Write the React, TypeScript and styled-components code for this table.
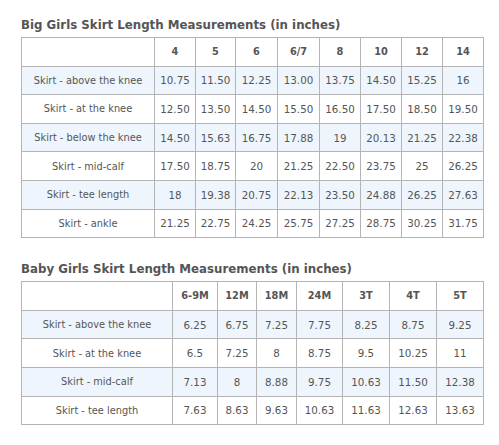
import styled, {createGlobalStyle} from "styled-components";

const GlobalStyle = createGlobalStyle`
  body {
    margin: 0;
    background: #fff;
    font-family: "DejaVu Sans", Verdana, sans-serif;
    color: #555;
  }
`;

const Page = styled.div`
  padding: 19px 16px 0 21px;
  width: 499px;
  box-sizing: border-box;
`;

const Section = styled.section`
  margin-bottom: 25px;
`;

const Title = styled.h2`
  margin: 0 0 5px;
  font-size: 11.8px;
  line-height: 13px;
  font-weight: bold;
  color: #555;
`;

const Table = styled.table`
  border-collapse: collapse;
  table-layout: fixed;
  width: 462px;
  border: 1px solid #a9a9a9;
`;

const Row = styled.tr<{$shaded?: boolean}>`
  height: 28.6px;
  background: ${p => (p.$shaded ? "#eef5fc" : "#fff")};
`;

const Cell = styled.td`
  border: 1px solid #b4b4b4;
  padding: 0;
  text-align: center;
  vertical-align: middle;
  font-size: 10.3px;
  color: #555;
  white-space: nowrap;
`;

const Label = styled(Cell)`
  font-size: 9.8px;
`;

const Head = styled(Cell).attrs({as: "th"})`
  font-weight: bold;
  font-size: 9.8px;
`;

interface ChartProps {
  title: string;
  widths: number[];
  sizes: string[];
  rows: [string, string[]][];
}

function Chart({title, widths, sizes, rows}: ChartProps) {
  return (
    <Section>
      <Title>{title}</Title>
      <Table>
        <colgroup>
          {widths.map((w, i) => (
            <col key={i} style={{width: w}} />
          ))}
        </colgroup>
        <thead>
          <Row>
            <Head />
            {sizes.map(s => (
              <Head key={s}>{s}</Head>
            ))}
          </Row>
        </thead>
        <tbody>
          {rows.map(([label, values], i) => (
            <Row key={label} $shaded={i % 2 === 0}>
              <Label>{label}</Label>
              {values.map((v, j) => (
                <Cell key={j}>{v}</Cell>
              ))}
            </Row>
          ))}
        </tbody>
      </Table>
    </Section>
  );
}

const bigGirls: [string, string[]][] = [
  ["Skirt - above the knee", ["10.75", "11.50", "12.25", "13.00", "13.75", "14.50", "15.25", "16"]],
  ["Skirt - at the knee", ["12.50", "13.50", "14.50", "15.50", "16.50", "17.50", "18.50", "19.50"]],
  ["Skirt - below the knee", ["14.50", "15.63", "16.75", "17.88", "19", "20.13", "21.25", "22.38"]],
  ["Skirt - mid-calf", ["17.50", "18.75", "20", "21.25", "22.50", "23.75", "25", "26.25"]],
  ["Skirt - tee length", ["18", "19.38", "20.75", "22.13", "23.50", "24.88", "26.25", "27.63"]],
  ["Skirt - ankle", ["21.25", "22.75", "24.25", "25.75", "27.25", "28.75", "30.25", "31.75"]],
];

const babyGirls: [string, string[]][] = [
  ["Skirt - above the knee", ["6.25", "6.75", "7.25", "7.75", "8.25", "8.75", "9.25"]],
  ["Skirt - at the knee", ["6.5", "7.25", "8", "8.75", "9.5", "10.25", "11"]],
  ["Skirt - mid-calf", ["7.13", "8", "8.88", "9.75", "10.63", "11.50", "12.38"]],
  ["Skirt - tee length", ["7.63", "8.63", "9.63", "10.63", "11.63", "12.63", "13.63"]],
];

export default function App() {
  return (
    <>
      <GlobalStyle />
      <Page>
        <Chart
          title="Big Girls Skirt Length Measurements (in inches)"
          widths={[133, 41, 40, 42, 42, 41, 41, 41, 41]}
          sizes={["4", "5", "6", "6/7", "8", "10", "12", "14"]}
          rows={bigGirls}
        />
        <Chart
          title="Baby Girls Skirt Length Measurements (in inches)"
          widths={[151, 45, 39, 40, 46, 47, 47, 47]}
          sizes={["6-9M", "12M", "18M", "24M", "3T", "4T", "5T"]}
          rows={babyGirls}
        />
      </Page>
    </>
  );
}
